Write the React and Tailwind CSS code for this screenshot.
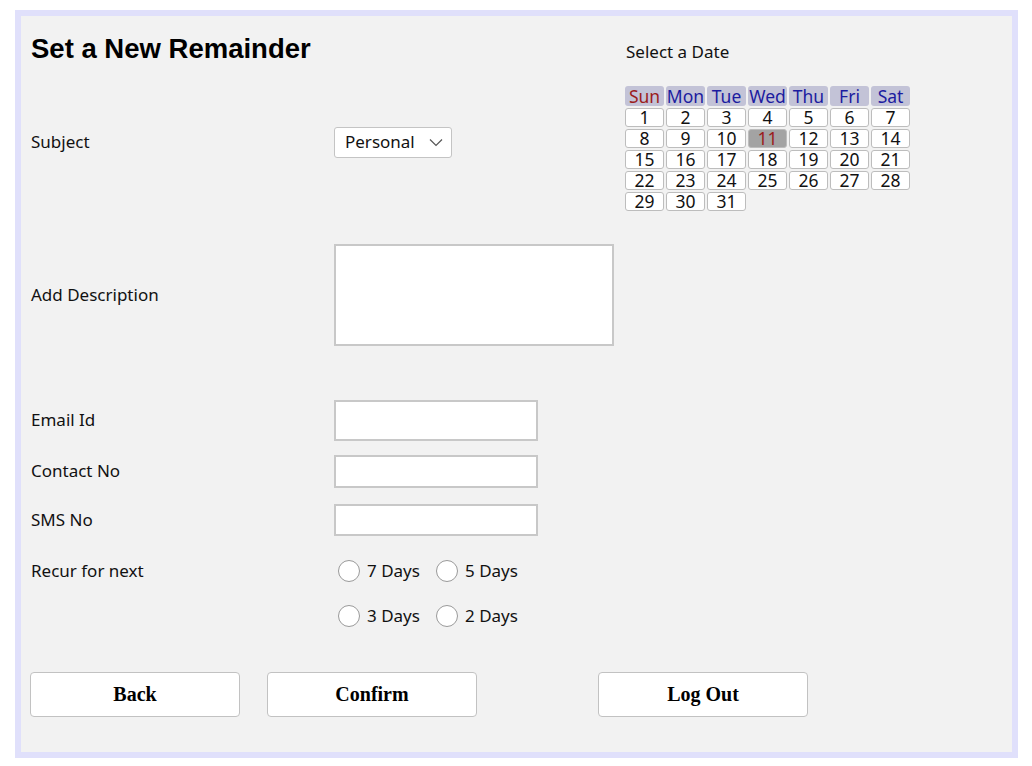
import React from "react";

const days = ["Sun", "Mon", "Tue", "Wed", "Thu", "Fri", "Sat"];
const dates = Array.from({ length: 31 }, (_, i) => i + 1);

function Radio({ label }) {
  return (
    <div className="flex items-center w-[98px]">
      <div className="w-[22px] h-[22px] rounded-full border border-[#9a9a9a] bg-white ml-[4px]" />
      <span className="ml-[7px]">{label}</span>
    </div>
  );
}

export default function App() {
  const sans = { fontFamily: '"Noto Sans", "Open Sans", sans-serif' };
  return (
    <div className="w-[1032px] h-[766px] bg-white pt-[10px] pl-[15px]" style={sans}>
      <div className="w-[1003px] h-[748px] border-[6px] border-[#e0e0fb] bg-[#f2f2f2] flex flex-col text-[17px] text-[#111]">
        <div className="flex">
          {/* left form */}
          <div className="w-[604px] pl-[10px] flex flex-col">
            <div className="h-[64px] flex items-center pt-[1px]">
              <h1 className="text-[27.5px] font-bold text-black" style={{ fontFamily: '"Liberation Sans", Arial, sans-serif' }}>
                Set a New Remainder
              </h1>
            </div>
            <div className="h-[124px] flex items-center">
              <div className="w-[303px]">Subject</div>
              <div className="w-[118px] h-[31px] bg-white border border-[#c4c4c4] rounded-[3px] flex items-center justify-between pl-[10px] pr-[8px]">
                <span>Personal</span>
                <svg width="14" height="9" viewBox="0 0 14 9">
                  <polyline points="1,1.5 7,7.5 13,1.5" fill="none" stroke="#555" strokeWidth="1.2" />
                </svg>
              </div>
            </div>
            <div className="h-[182px] flex items-center">
              <div className="w-[303px]">Add Description</div>
              <div className="w-[280px] h-[102px] bg-white border-2 border-[#c8c8c8]" />
            </div>
            <div className="h-[68px] flex items-center">
              <div className="w-[303px]">Email Id</div>
              <div className="w-[204px] h-[41px] bg-white border-2 border-[#c8c8c8]" />
            </div>
            <div className="h-[34px] flex items-center">
              <div className="w-[303px]">Contact No</div>
              <div className="w-[204px] h-[33px] bg-white border-2 border-[#c8c8c8]" />
            </div>
            <div className="h-[64px] flex items-center">
              <div className="w-[303px]">SMS No</div>
              <div className="w-[204px] h-[32px] bg-white border-2 border-[#c8c8c8]" />
            </div>
            <div className="h-[38px] flex items-center">
              <div className="w-[303px]">Recur for next</div>
              <Radio label="7 Days" />
              <Radio label="5 Days" />
            </div>
            <div className="h-[52px] flex items-center">
              <div className="w-[303px]" />
              <Radio label="3 Days" />
              <Radio label="2 Days" />
            </div>
          </div>
          {/* calendar */}
          <div className="flex flex-col">
            <div className="mt-[24px] ml-[1px] h-[24px] leading-[24px]">Select a Date</div>
            <div className="mt-[22px] grid grid-cols-[repeat(7,39px)] gap-x-[2px] gap-y-[2px] w-[284px] text-[17.5px] leading-[17px]">
              {days.map((d, i) => (
                <div
                  key={d}
                  className={`h-[20px] rounded-[3px] bg-[#c3c3d7] flex items-center justify-center ${i === 0 ? "text-[#9b1c1c]" : "text-[#1c1ca0]"}`}
                >
                  {d}
                </div>
              ))}
              {dates.map((n) => (
                <div
                  key={n}
                  className={`h-[19px] rounded-[3px] border border-[#bdbdbd] flex items-center justify-center ${n === 11 ? "bg-[#a3a3a3] text-[#9b1c1c]" : "bg-white text-[#111]"}`}
                >
                  {n}
                </div>
              ))}
            </div>
          </div>
        </div>
        {/* buttons */}
        <div className="h-[104px] flex items-center pl-[9px]" style={{ fontFamily: '"Liberation Serif", "Times New Roman", serif' }}>
          <button className="w-[210px] h-[45px] bg-white border border-[#c2c2c2] rounded-[4px] text-[20px] font-bold text-black">Back</button>
          <button className="ml-[27px] w-[210px] h-[45px] bg-white border border-[#c2c2c2] rounded-[4px] text-[20px] font-bold text-black">Confirm</button>
          <button className="ml-[121px] w-[210px] h-[45px] bg-white border border-[#c2c2c2] rounded-[4px] text-[20px] font-bold text-black">Log Out</button>
        </div>
      </div>
    </div>
  );
}
